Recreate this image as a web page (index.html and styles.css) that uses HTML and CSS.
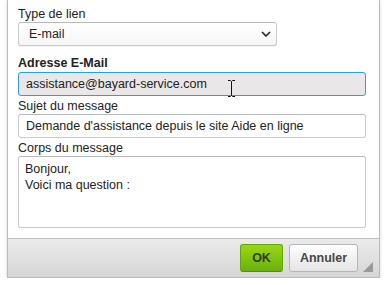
FILE: index.html
```html
<!DOCTYPE html>
<html lang="fr">
<head>
  <meta charset="UTF-8">
  <title>Lien</title>
  <link rel="stylesheet" href="styles.css">
</head>
<body>
<div class="dialog">
  <div class="dialog-body">
    <div class="field">
      <label class="field-label" for="linkType">Type de lien</label>
      <div class="select-wrap">
        <select id="linkType" class="select">
          <option>E-mail</option>
        </select>
        <svg class="select-arrow" width="10" height="6" viewBox="0 0 10 6">
          <path d="M1 1 L5 5 L9 1" fill="none" stroke="#222" stroke-width="1.6"/>
        </svg>
      </div>
    </div>

    <div class="field field-email">
      <label class="field-label bold" for="emailAddr">Adresse E-Mail</label>
      <input type="text" id="emailAddr" class="text-input focused" value="assistance@bayard-service.com">
    </div>

    <div class="field">
      <label class="field-label" for="subject">Sujet du message</label>
      <input type="text" id="subject" class="text-input" value="Demande d'assistance depuis le site Aide en ligne">
    </div>

    <div class="field">
      <label class="field-label" for="body">Corps du message</label>
      <textarea id="body" class="text-area">Bonjour,
Voici ma question :</textarea>
    </div>
  </div>

  <div class="dialog-footer">
    <button type="button" class="btn btn-ok">OK</button>
    <button type="button" class="btn btn-cancel">Annuler</button>
    <span class="resize-grip"></span>
  </div>

  <!-- mouse cursor over the email field -->
  <svg class="ibeam" width="9" height="17" viewBox="0 0 9 17">
    <path d="M1 0.5 H3.5 L4.5 1.5 L5.5 0.5 H8 M4.5 1.5 V15.5 M1 16.5 H3.5 L4.5 15.5 L5.5 16.5 H8" fill="none" stroke="#111" stroke-width="1"/>
  </svg>
</div>
</body>
</html>
```

FILE: styles.css
```css
body {
  margin: 0;
  background-color: #ffffff;
  font-family: "Liberation Sans", Arial, sans-serif;
  font-size: 12.5px;
  color: #222;
}

.dialog {
  position: relative;
  margin-left: 7px;
  width: 371px;
  border: 1px solid #bcbcbc;
  border-top: none;
  background-color: #ffffff;
  box-shadow: 0 1px 3px rgba(0, 0, 0, 0.18);
}

.dialog-body {
  padding: 7px 12px 10px 10px;
}

.field {
  margin-top: 3px;
}

.field:first-child {
  margin-top: 0;
}

.field-email {
  margin-top: 10px;
}

.field-label {
  display: block;
  height: 14px;
  line-height: 14px;
  margin-bottom: 1px;
}

.field-label.bold {
  font-weight: bold;
  margin-bottom: 2px;
}

.select-wrap {
  position: relative;
  width: 259px;
}

.select {
  display: block;
  width: 259px;
  height: 24px;
  padding: 0 0 0 10px;
  margin: 0;
  font-family: inherit;
  font-size: 12.5px;
  color: #222;
  border: 1px solid #c9cccf;
  border-top-color: #b6bbc0;
  border-radius: 3px;
  background: linear-gradient(#ffffff, #f6f6f6);
  -webkit-appearance: none;
  appearance: none;
  box-shadow: 0 1px 0 rgba(0, 0, 0, 0.05);
}

.select-arrow {
  position: absolute;
  right: 6px;
  top: 9px;
}

.text-input {
  display: block;
  width: 348px;
  height: 24px;
  box-sizing: border-box;
  padding: 0 7px;
  margin: 0;
  font-family: inherit;
  font-size: 12.5px;
  color: #222;
  border: 1px solid #c9cccf;
  border-top-color: #b6bbc0;
  border-radius: 3px;
  background-color: #ffffff;
  outline: none;
}

.text-input.focused {
  border-color: #2a9cf2;
  background-color: #e9e7e7;
}

.text-area {
  display: block;
  width: 348px;
  height: 72px;
  box-sizing: border-box;
  padding: 4px 6px;
  margin: 0;
  font-family: inherit;
  font-size: 12.5px;
  line-height: 16px;
  color: #222;
  border: 1px solid #c9cccf;
  border-top-color: #b6bbc0;
  border-radius: 3px;
  resize: none;
  outline: none;
}

.dialog-footer {
  display: flex;
  justify-content: flex-end;
  align-items: center;
  gap: 6px;
  height: 38px;
  padding-right: 21px;
  border-top: 1px solid #bfbfbf;
  background: linear-gradient(#ebebeb, #d6d6d6);
  position: relative;
}

.btn {
  height: 28px;
  box-sizing: border-box;
  font-family: inherit;
  font-size: 12.5px;
  font-weight: bold;
  border-radius: 3px;
  cursor: pointer;
}

.btn-ok {
  width: 43px;
  color: #2d3d12;
  border: 1px solid #62a60a;
  border-bottom-color: #4d9200;
  background: linear-gradient(#9ad717, #69b10b);
}

.btn-cancel {
  width: 69px;
  color: #474747;
  border: 1px solid #b6b6b6;
  background: linear-gradient(#ffffff, #e4e4e4);
}

.resize-grip {
  position: absolute;
  right: 6px;
  bottom: 5px;
  width: 0;
  height: 0;
  border-left: 10px solid transparent;
  border-bottom: 10px solid #9a9a9a;
}

.ibeam {
  position: absolute;
  left: 219px;
  top: 80px;
}
```
